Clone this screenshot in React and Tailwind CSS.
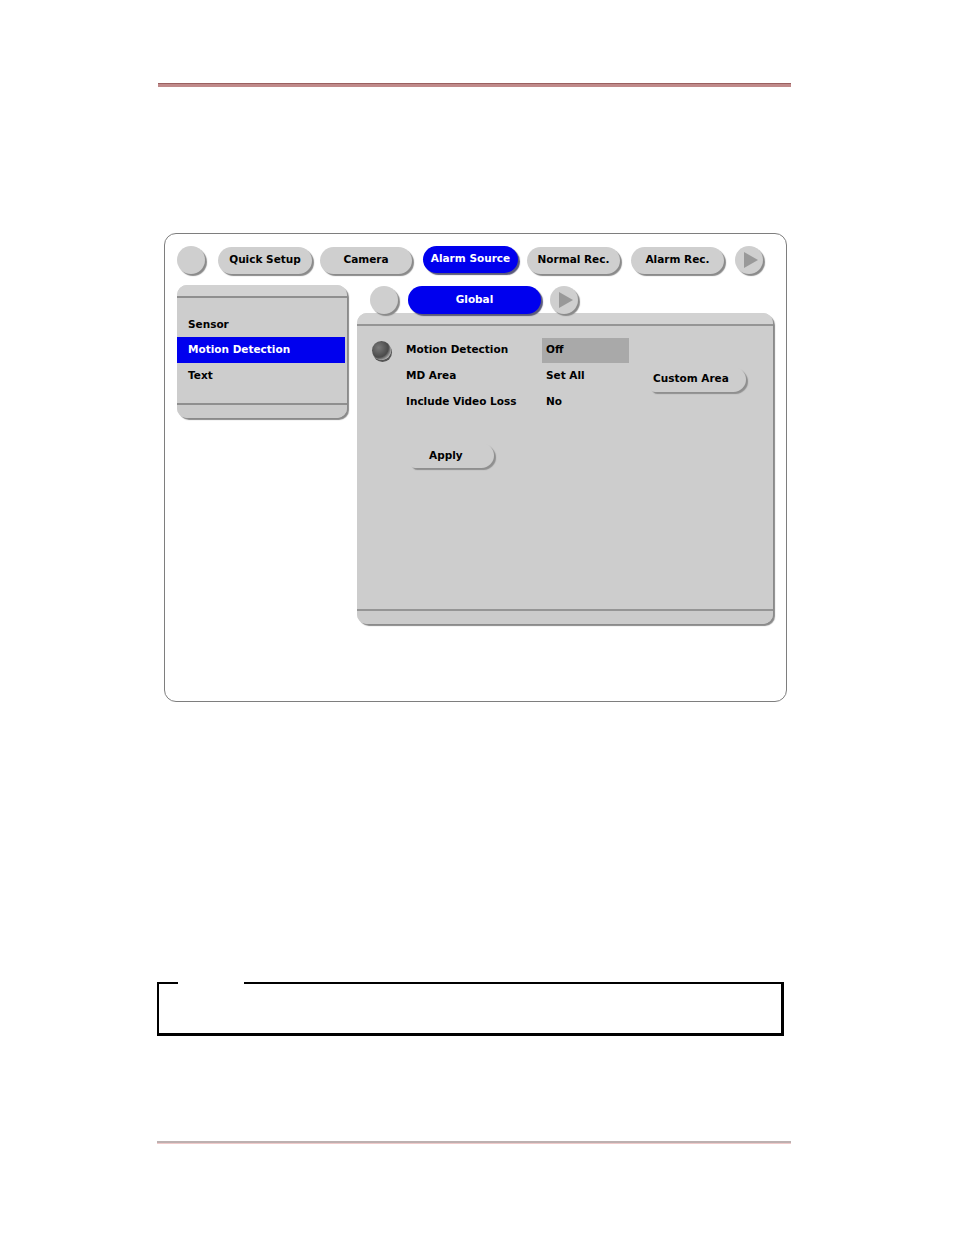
import React from 'react';

const txt = "text-[10.5px] font-bold font-['DejaVu_Sans',Verdana,sans-serif]";
const pill = `flex items-center justify-center rounded-full ${txt}`;
const grayPill = `${pill} bg-[#cfcfcf] text-black shadow-[2px_2px_1px_#8a8a8a]`;
const bluePill = `${pill} bg-[#0000ee] text-white shadow-[2px_2px_1px_#5a5a7a]`;

function RoundButton() {
  return <div className="w-[28px] h-[28px] rounded-full bg-[#cfcfcf] shadow-[2px_2px_1px_#8a8a8a] shrink-0" />;
}

function ArrowButton() {
  return (
    <div className="w-[28px] h-[28px] rounded-full bg-[#cfcfcf] shadow-[2px_2px_1px_#8a8a8a] shrink-0 flex items-center justify-center">
      <svg width="16" height="18" viewBox="0 0 16 18" className="ml-[4px]">
        <path d="M1 1 L15 9 L1 17 Z" fill="#999999" />
      </svg>
    </div>
  );
}

// flat button with rounded shaded edge on the right, like the OSD "Apply"
function EdgeButton({ children, className = '' }) {
  return (
    <div
      className={`flex items-center rounded-l-[6px] rounded-r-[14px] text-black shadow-[2px_2px_1px_#8f8f8f] ${txt} ${className}`}
    >
      {children}
    </div>
  );
}

function Row({ bullet, label, children, extra }) {
  return (
    <div className="flex items-center h-[26px]">
      <div className="w-[49px] pl-[15px] shrink-0">
        {bullet && (
          <div className="w-[19px] h-[19px] rounded-full bg-[radial-gradient(circle_at_35%_35%,#7a7a7a,#4a4a4a_55%,#d8d8d8_85%)] shadow-[1px_2px_0_#555]" />
        )}
      </div>
      <div className={`w-[140px] shrink-0 text-black ${txt}`}>{label}</div>
      <div className="w-[104px] shrink-0">{children}</div>
      {extra}
    </div>
  );
}

export default function App() {
  return (
    <div className="w-[954px] h-[1235px] bg-white font-['Liberation_Sans',Arial,sans-serif]">
      {/* header rule */}
      <div className="pt-[83px] pl-[158px]">
        <div className="w-[633px] h-[4px] border-t border-[#9a6060] bg-[#c08a8a]" />
      </div>

      {/* OSD window */}
      <div className="mt-[146px] ml-[164px] w-[623px] h-[469px] rounded-[12px] border border-[#7e7e7e] pt-[12px] pl-[12px]">
        {/* main tabs */}
        <div className="flex items-center h-[28px]">
          <RoundButton />
          <div className={`${grayPill} ml-[13px] w-[94px] h-[27px]`}>Quick Setup</div>
          <div className={`${grayPill} ml-[8px] w-[92px] h-[27px]`}>Camera</div>
          <div className={`${bluePill} ml-[11px] w-[95px] h-[27px] -mt-[2px]`}>Alarm Source</div>
          <div className={`${grayPill} ml-[9px] w-[93px] h-[27px]`}>Normal Rec.</div>
          <div className={`${grayPill} ml-[11px] w-[93px] h-[27px]`}>Alarm Rec.</div>
          <div className="ml-[11px]">
            <ArrowButton />
          </div>
        </div>

        <div className="flex mt-[11px]">
          {/* side menu */}
          <div className="w-[170px] h-[133px] rounded-[10px] bg-[#cdcdcd] shadow-[2px_2px_1px_#8a8a8a] flex flex-col overflow-hidden">
            <div className="h-[13px] border-b-2 border-[#8f8f8f] bg-[#d2d2d2]" />
            <div className={`pt-[14px] flex-1 ${txt}`}>
              <div className="h-[25px] flex items-center pl-[11px] text-black">Sensor</div>
              <div className="h-[26px] flex items-center pl-[11px] mr-[2px] bg-[#0000ee] text-white">Motion Detection</div>
              <div className="h-[26px] flex items-center pl-[11px] text-black">Text</div>
            </div>
            <div className="h-[15px] border-t-2 border-[#8f8f8f] bg-[#cbcbcb]" />
          </div>

          {/* content */}
          <div className="ml-[10px] w-[416px]">
            <div className="relative z-10 flex items-center h-[30px] pl-[13px] -mb-[2px]">
              <RoundButton />
              <div className={`${bluePill} ml-[10px] w-[133px] h-[28px]`}>Global</div>
              <div className="ml-[9px]">
                <ArrowButton />
              </div>
            </div>
            <div className="h-[311px] rounded-[10px] bg-[#cdcdcd] shadow-[2px_2px_1px_#8a8a8a] flex flex-col overflow-hidden">
              <div className="h-[13px] border-b-2 border-[#959595] bg-[#d2d2d2]" />
              <div className="flex-1 pt-[11px]">
                <Row bullet label="Motion Detection">
                  <div className={`w-[87px] h-[25px] -ml-[4px] pl-[4px] flex items-center bg-[#a9a9a9] text-black ${txt}`}>Off</div>
                </Row>
                <Row
                  label="MD Area"
                  extra={<EdgeButton className="w-[96px] h-[25px] mt-[6px] pl-[3px]">Custom Area</EdgeButton>}
                >
                  <div className={`text-black ${txt}`}>Set All</div>
                </Row>
                <Row label="Include Video Loss">
                  <div className={`text-black ${txt}`}>No</div>
                </Row>
                <EdgeButton className="ml-[53px] mt-[28px] w-[84px] h-[25px] pl-[19px]">Apply</EdgeButton>
              </div>
              <div className="h-[15px] border-t-2 border-[#959595] bg-[#cbcbcb]" />
            </div>
          </div>
        </div>
      </div>

      {/* note box */}
      <div className="mt-[280px] ml-[157px] w-[627px] h-[54px] relative border-l-2 border-r-[3px] border-t-2 border-b-[3px] border-black">
        <div className="absolute -top-[2px] left-[19px] w-[66px] h-[2px] bg-white" />
      </div>

      {/* footer rule */}
      <div className="mt-[105px] ml-[157px] w-[634px] h-[3px] border-t-2 border-[#bdb0b0] bg-[#f0caca]" />
    </div>
  );
}
